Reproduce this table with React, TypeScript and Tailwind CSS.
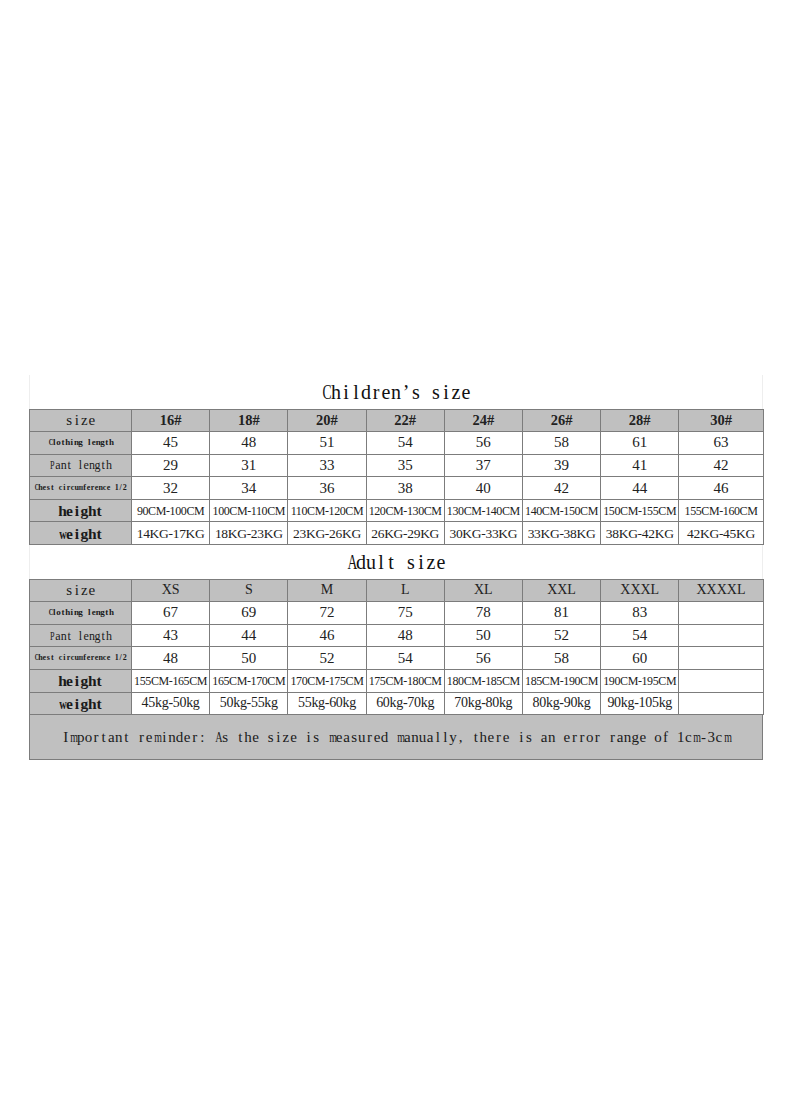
import React from 'react';

type Row = {
  label: string;
  labelClass: string;
  slot: string;
  cells: string[];
  cellClass: string;
  header?: boolean;
};

const serif = "font-[family-name:'Liberation_Serif',serif]";

// squeeze wide glyphs so they stay inside their half-width slot
const squeeze = (ch: string) => {
  if (/[mwMW]/.test(ch)) return 'scale-x-[0.66]';
  if (/[A-HK-Z]/.test(ch)) return 'scale-x-[0.68]';
  return '';
};

// half-width serif look: every character sits in a fixed slot
const Mono = ({ text, slot }: { text: string; slot: string }) => (
  <span className="inline-flex justify-center">
    {Array.from(text).map((ch, i) => (
      <span key={i} className={`inline-block text-center ${slot} ${squeeze(ch)}`}>
        {ch === ' ' ? '\u00a0' : ch}
      </span>
    ))}
  </span>
);

const childRows: Row[] = [
  {
    label: 'size',
    labelClass: 'text-[15px]',
    slot: 'w-[7.5px]',
    cells: ['16#', '18#', '20#', '22#', '24#', '26#', '28#', '30#'],
    cellClass: 'text-[14.5px] font-bold',
    header: true,
  },
  {
    label: 'Clothing length',
    labelClass: 'text-[9px] font-bold',
    slot: 'w-[4.4px]',
    cells: ['45', '48', '51', '54', '56', '58', '61', '63'],
    cellClass: 'text-[15px]',
  },
  {
    label: 'Pant length',
    labelClass: 'text-[12px]',
    slot: 'w-[5.65px]',
    cells: ['29', '31', '33', '35', '37', '39', '41', '42'],
    cellClass: 'text-[15px]',
  },
  {
    label: 'Chest circumference 1/2',
    labelClass: 'text-[8px] font-bold',
    slot: 'w-[4.03px]',
    cells: ['32', '34', '36', '38', '40', '42', '44', '46'],
    cellClass: 'text-[15px]',
  },
  {
    label: 'height',
    labelClass: 'text-[15.5px] font-bold',
    slot: 'w-[7.4px]',
    cells: [
      '90CM-100CM',
      '100CM-110CM',
      '110CM-120CM',
      '120CM-130CM',
      '130CM-140CM',
      '140CM-150CM',
      '150CM-155CM',
      '155CM-160CM',
    ],
    cellClass: 'text-[12px] tracking-[-0.4px]',
  },
  {
    label: 'weight',
    labelClass: 'text-[15.5px] font-bold',
    slot: 'w-[7.4px]',
    cells: [
      '14KG-17KG',
      '18KG-23KG',
      '23KG-26KG',
      '26KG-29KG',
      '30KG-33KG',
      '33KG-38KG',
      '38KG-42KG',
      '42KG-45KG',
    ],
    cellClass: 'text-[13.5px] tracking-[-0.3px]',
  },
];

const adultRows: Row[] = [
  { ...childRows[0], cells: ['XS', 'S', 'M', 'L', 'XL', 'XXL', 'XXXL', 'XXXXL'], cellClass: 'text-[14px]' },
  { ...childRows[1], cells: ['67', '69', '72', '75', '78', '81', '83', ''] },
  { ...childRows[2], cells: ['43', '44', '46', '48', '50', '52', '54', ''] },
  { ...childRows[3], cells: ['48', '50', '52', '54', '56', '58', '60', ''] },
  {
    ...childRows[4],
    cells: [
      '155CM-165CM',
      '165CM-170CM',
      '170CM-175CM',
      '175CM-180CM',
      '180CM-185CM',
      '185CM-190CM',
      '190CM-195CM',
      '',
    ],
  },
  {
    ...childRows[5],
    cells: [
      '45kg-50kg',
      '50kg-55kg',
      '55kg-60kg',
      '60kg-70kg',
      '70kg-80kg',
      '80kg-90kg',
      '90kg-105kg',
      '',
    ],
    cellClass: 'text-[14px] tracking-[-0.3px]',
  },
];

const Title = ({ text }: { text: string }) => (
  <div
    className={`h-[33.5px] flex items-center justify-center border-x border-[#eeeeee] text-[20px] text-[#111] ${serif}`}
  >
    <Mono text={text} slot="w-[10px]" />
  </div>
);

const SizeTable = ({ rows }: { rows: Row[] }) => (
  <table className="w-[734px] table-fixed border-collapse">
    <colgroup>
      <col className="w-[102px]" />
      {[0, 1, 2, 3, 4, 5, 6].map((i) => (
        <col key={i} className="w-[78.2px]" />
      ))}
      <col className="w-[84.4px]" />
    </colgroup>
    <tbody>
      {rows.map((row, r) => (
        <tr key={r} className="h-[22.6px]">
          <td
            className={`border border-[#7c7c7c] bg-[#c0c0c0] p-0 text-center leading-none whitespace-nowrap text-[#1a1a1a] ${serif} ${row.labelClass}`}
          >
            <Mono text={row.label} slot={row.slot} />
          </td>
          {row.cells.map((c, i) => (
            <td
              key={i}
              className={`border border-[#7c7c7c] p-0 text-center leading-none whitespace-nowrap text-[#222] ${serif} ${
                row.header ? 'bg-[#c0c0c0]' : 'bg-white'
              } ${row.cellClass}`}
            >
              {c}
            </td>
          ))}
        </tr>
      ))}
    </tbody>
  </table>
);

const App = () => {
  return (
    <div className="min-h-[1096px] w-[800px] bg-white pt-[375px] pl-[29px]">
      <div className="w-[734px]">
        <Title text="Children’s size" />
        <SizeTable rows={childRows} />
        <Title text="Adult size" />
        <SizeTable rows={adultRows} />
        <div
          className={`h-[45px] flex items-center justify-center border border-t-0 border-[#7c7c7c] bg-[#c0c0c0] text-[15px] text-[#1a1a1a] ${serif}`}
        >
          <Mono
            text="Important reminder: As the size is measured manually, there is an error range of 1cm-3cm"
            slot="w-[7.6px]"
          />
        </div>
      </div>
    </div>
  );
};

export default App;
